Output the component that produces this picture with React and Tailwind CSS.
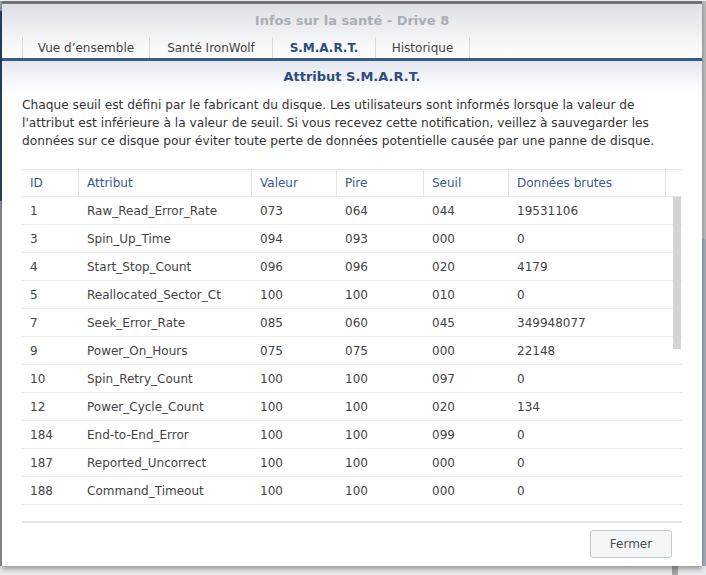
const rows = [
  ["1", "Raw_Read_Error_Rate", "073", "064", "044", "19531106"],
  ["3", "Spin_Up_Time", "094", "093", "000", "0"],
  ["4", "Start_Stop_Count", "096", "096", "020", "4179"],
  ["5", "Reallocated_Sector_Ct", "100", "100", "010", "0"],
  ["7", "Seek_Error_Rate", "085", "060", "045", "349948077"],
  ["9", "Power_On_Hours", "075", "075", "000", "22148"],
  ["10", "Spin_Retry_Count", "100", "100", "097", "0"],
  ["12", "Power_Cycle_Count", "100", "100", "020", "134"],
  ["184", "End-to-End_Error", "100", "100", "099", "0"],
  ["187", "Reported_Uncorrect", "100", "100", "000", "0"],
  ["188", "Command_Timeout", "100", "100", "000", "0"],
];

const cols = ["w-[57px]", "w-[173px]", "w-[85px]", "w-[87px]", "w-[85px]", "w-[157px]"];
const heads = ["ID", "Attribut", "Valeur", "Pire", "Seuil", "Données brutes"];
const tabs = [
  { label: "Vue d’ensemble", w: "w-[128px]" },
  { label: "Santé IronWolf", w: "w-[123px]" },
  { label: "S.M.A.R.T.", w: "w-[103px]", active: true },
  { label: "Historique", w: "w-[94px]" },
];

export default function App() {
  return (
    <div
      className="w-[706px] h-[575px] overflow-hidden bg-[#e9eaec] flex flex-col"
      style={{ fontFamily: '"DejaVu Sans", Verdana, sans-serif' }}
    >
      <div className="h-[1px] bg-[#f2f3f4] shrink-0" />
      <div className="flex h-[565px] shrink-0">
        {/* left edge of the page behind */}
        <div className="w-[2px] flex flex-col">
          <div className="h-[10px] bg-[#9aa0a8]" />
          <div className="h-[190px] bg-[#2c426c]" />
          <div className="flex-1 bg-[#8f9399]" />
        </div>

        {/* DIALOG */}
        <div className="w-[700px] flex flex-col bg-white border-t-[3px] border-[#6f7379] shadow-[0_3px_5px_rgba(0,0,0,0.35)] relative z-10">
          {/* HEADER */}
          <div className="bg-gradient-to-b from-[#dde1e6] to-white h-[54px] flex flex-col shrink-0">
            <div className="h-[33px] flex items-center justify-center text-[13px] font-bold text-[#a9aeb5]">
              Infos sur la santé - Drive 8
            </div>
            <div className="flex pl-[20px] h-[21px]">
              {tabs.map((t, i) => (
                <div
                  key={t.label}
                  className={`${t.w} flex items-center justify-center pt-[1px] text-[12px] border-r border-[#d6dae0] ${
                    i === 0 ? "border-l" : ""
                  } ${t.active ? "font-bold text-[#2c4b80]" : "text-[#444]"}`}
                >
                  {t.label}
                </div>
              ))}
            </div>
          </div>
          <div className="h-[3px] bg-[#3b5a8e] shrink-0" />

          {/* SUBTITLE */}
          <div className="bg-gradient-to-b from-[#e3e8f0] to-white h-[31px] flex items-center justify-center text-[13px] font-bold text-[#2e4c7e] shrink-0">
            Attribut S.M.A.R.T.
          </div>

          {/* DESCRIPTION */}
          <div className="px-[20px] pt-[4px] text-[12.2px] leading-[18px] text-[#333] whitespace-nowrap">
            Chaque seuil est défini par le fabricant du disque. Les utilisateurs sont informés lorsque la valeur de
            <br />
            l'attribut est inférieure à la valeur de seuil. Si vous recevez cette notification, veillez à sauvegarder les
            <br />
            données sur ce disque pour éviter toute perte de données potentielle causée par une panne de disque.
          </div>

          {/* TABLE */}
          <div className="mx-[20px] mt-[19px] w-[660px] border-t border-[#dfe5ee] text-[12px]">
            <div className="flex h-[27px] border-b border-[#dfe5ee] text-[#3b5a8c]">
              {heads.map((h, i) => (
                <div key={h} className={`${cols[i]} flex items-center pl-[8px] border-r border-[#e2e7ef]`}>
                  {h}
                </div>
              ))}
            </div>
            <div className="relative h-[326px] border-b-2 border-[#e4e4e4]">
              {rows.map((r) => (
                <div key={r[0]} className="flex h-[28px] border-b border-[#ececec] text-[#444]">
                  {r.map((c, i) => (
                    <div key={i} className={`${cols[i]} flex items-center pl-[8px]`}>
                      {c}
                    </div>
                  ))}
                </div>
              ))}
              <div className="absolute right-[1px] top-0 w-[8px] h-[152px] bg-[#d4d4d4]" />
            </div>
          </div>

          {/* FOOTER */}
          <div className="flex justify-end pr-[30px] pt-[7px]">
            <button className="w-[82px] h-[28px] rounded-[3px] border border-[#c5cad2] bg-[#f4f6f9] text-[12px] text-[#505050]">
              Fermer
            </button>
          </div>
        </div>

        {/* right edge of the page behind */}
        <div className="w-[4px] flex flex-col">
          <div className="h-[238px] bg-[#b9bbbe]" />
          <div className="flex-1 bg-[#a3adbd]" />
        </div>
      </div>
      <div className="flex-1 flex justify-end pr-[28px]">
        <div className="w-[6px] h-full bg-[#a7a7a7]" />
      </div>
    </div>
  );
}
